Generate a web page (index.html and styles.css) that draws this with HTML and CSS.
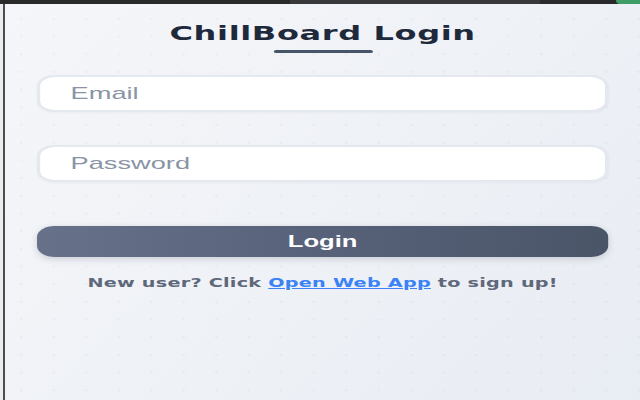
FILE: index.html
```html
<!DOCTYPE html>
<html lang="en">
<head>
<meta charset="utf-8">
<title>ChillBoard Login</title>
<link rel="stylesheet" href="styles.css">
</head>
<body>
<div class="screen">
  <div class="topbar"><span class="tab-dim"></span><span class="ext-dot"></span></div>
  <div class="row">
    <div class="behind"></div>
    <div class="popup-frame">
      <main class="popup">
        <h1 class="title">ChillBoard Login</h1>
        <div class="title-rule"></div>
        <form class="form">
          <input class="field" type="email" placeholder="Email">
          <input class="field" type="password" placeholder="Password">
          <button class="login-btn" type="button">Login</button>
        </form>
        <p class="signup">New user? Click <a href="#">Open Web App</a> to sign up!</p>
      </main>
    </div>
  </div>
</div>
</body>
</html>
```
FILE: styles.css
```css
html, body {
  margin: 0;
  height: 100%;
  overflow: hidden;
}
body {
  font-family: "Liberation Sans", Arial, sans-serif;
  background: #2b2b2b;
}
.screen {
  display: flex;
  flex-direction: column;
  width: 640px;
  height: 400px;
}
.topbar {
  height: 4px;
  flex: none;
  background: #2a2a2b;
  display: flex;
  align-items: stretch;
}
.tab-dim {
  margin-left: 290px;
  width: 250px;
  background: #38383a;
}
.ext-dot {
  margin-left: auto;
  width: 24px;
  background: #3f9d66;
  border-radius: 0 0 0 10px;
}
.row {
  flex: 1;
  display: flex;
}
.behind {
  width: 3px;
  background: #ececec;
  border-right: 2px solid #4d4d4f;
}
.popup-frame {
  flex: 1;
  overflow: hidden;
  background:
    radial-gradient(ellipse 1.6px 1px, rgba(110, 122, 145, 0.08) 60%, transparent 100%) 0 6px / 32.5px 17.7px,
    linear-gradient(135deg, #f5f6f9 0%, #eef1f6 55%, #e8ecf3 100%);
}
.popup {
  width: 397px;
  box-sizing: border-box;
  padding: 16px 20px 0;
  transform: scaleX(1.6);
  transform-origin: 0 0;
  display: flex;
  flex-direction: column;
  align-items: center;
}
.title {
  margin: 0;
  font-family: "DejaVu Sans", "Liberation Sans", sans-serif;
  font-size: 20px;
  line-height: 26px;
  font-weight: 700;
  letter-spacing: 0.4px;
  color: #1e293b;
}
.title-rule {
  width: 62px;
  height: 3px;
  margin-top: 4px;
  border-radius: 2px;
  background: #475569;
}
.form {
  align-self: stretch;
  display: flex;
  flex-direction: column;
  margin: 22px 0 0;
}
.field {
  height: 37px;
  box-sizing: border-box;
  border: 2px solid #e4e8ef;
  border-radius: 11px;
  background: #ffffff;
  padding: 0 19px;
  font: 17px "Liberation Sans", Arial, sans-serif;
  color: #1e293b;
  outline: none;
  box-shadow: 0 1px 2px rgba(15, 23, 42, 0.04);
}
.field::placeholder {
  color: #8a94a6;
}
.field + .field {
  margin-top: 33px;
}
.login-btn {
  margin-top: 44px;
  height: 31px;
  border: 0;
  border-radius: 11px;
  background: linear-gradient(90deg, #67728a 0%, #57627a 50%, #4a5568 100%);
  color: #ffffff;
  font: 700 16px "Liberation Sans", Arial, sans-serif;
  box-shadow: 0 2px 6px rgba(30, 41, 59, 0.18);
}
.signup {
  margin: 17px 0 0;
  font-family: "DejaVu Sans", "Liberation Sans", sans-serif;
  font-size: 12px;
  line-height: 18px;
  font-weight: 700;
  letter-spacing: 0.15px;
  color: #5e687a;
}
.signup a {
  color: #3b82f6;
  text-decoration: underline;
}
```
